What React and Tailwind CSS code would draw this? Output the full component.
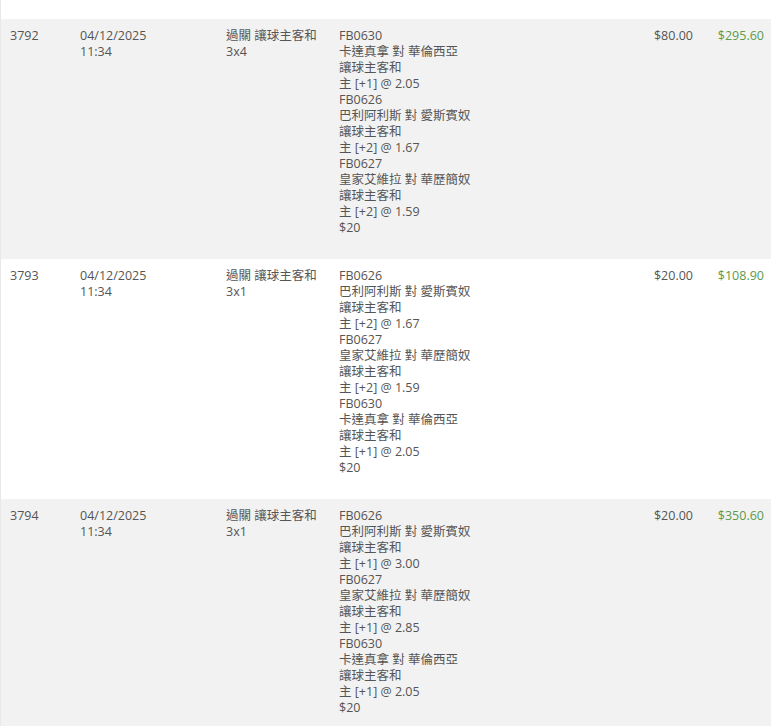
import React from 'react';

const bets = [
  {
    id: '3792',
    date: '04/12/2025',
    time: '11:34',
    type: '過關 讓球主客和',
    combo: '3x4',
    legs: [
      { code: 'FB0630', match: '卡達真拿 對 華倫西亞', pick: '主 [+1] @ 2.05' },
      { code: 'FB0626', match: '巴利阿利斯 對 愛斯賓奴', pick: '主 [+2] @ 1.67' },
      { code: 'FB0627', match: '皇家艾維拉 對 華歷簡奴', pick: '主 [+2] @ 1.59' }
    ],
    unit: '$20',
    stake: '$80.00',
    payout: '$295.60'
  },
  {
    id: '3793',
    date: '04/12/2025',
    time: '11:34',
    type: '過關 讓球主客和',
    combo: '3x1',
    legs: [
      { code: 'FB0626', match: '巴利阿利斯 對 愛斯賓奴', pick: '主 [+2] @ 1.67' },
      { code: 'FB0627', match: '皇家艾維拉 對 華歷簡奴', pick: '主 [+2] @ 1.59' },
      { code: 'FB0630', match: '卡達真拿 對 華倫西亞', pick: '主 [+1] @ 2.05' }
    ],
    unit: '$20',
    stake: '$20.00',
    payout: '$108.90'
  },
  {
    id: '3794',
    date: '04/12/2025',
    time: '11:34',
    type: '過關 讓球主客和',
    combo: '3x1',
    legs: [
      { code: 'FB0626', match: '巴利阿利斯 對 愛斯賓奴', pick: '主 [+1] @ 3.00' },
      { code: 'FB0627', match: '皇家艾維拉 對 華歷簡奴', pick: '主 [+1] @ 2.85' },
      { code: 'FB0630', match: '卡達真拿 對 華倫西亞', pick: '主 [+1] @ 2.05' }
    ],
    unit: '$20',
    stake: '$20.00',
    payout: '$350.60'
  }
];

function BetRow({ bet, shaded }) {
  return (
    <div className={`flex pl-[9px] pr-[7px] pt-[9px] pb-[23px] ${shaded ? 'bg-[#f2f2f2]' : 'bg-white'}`}>
      <div className="w-[70px] shrink-0">{bet.id}</div>
      <div className="w-[146px] shrink-0">
        <div>{bet.date}</div>
        <div>{bet.time}</div>
      </div>
      <div className="w-[113px] shrink-0">
        <div>{bet.type}</div>
        <div>{bet.combo}</div>
      </div>
      <div className="flex-1">
        {bet.legs.map((leg, i) => (
          <div key={i}>
            <div>{leg.code}</div>
            <div>{leg.match}</div>
            <div>讓球主客和</div>
            <div>{leg.pick}</div>
          </div>
        ))}
        <div>{bet.unit}</div>
      </div>
      <div className="w-[80px] shrink-0 text-right">{bet.stake}</div>
      <div className="w-[71px] shrink-0 text-right text-[#5b9a4c]">{bet.payout}</div>
    </div>
  );
}

export default function App() {
  return (
    <div
      className="min-h-screen bg-white border-l border-[#e8e8e8] text-[12.5px] leading-4 text-[#555555]"
      style={{ fontFamily: '"Open Sans", "Noto Sans CJK TC", sans-serif' }}
    >
      <div className="h-[19px]" />
      {bets.map((bet, i) => (
        <BetRow key={bet.id} bet={bet} shaded={i % 2 === 0} />
      ))}
    </div>
  );
}
